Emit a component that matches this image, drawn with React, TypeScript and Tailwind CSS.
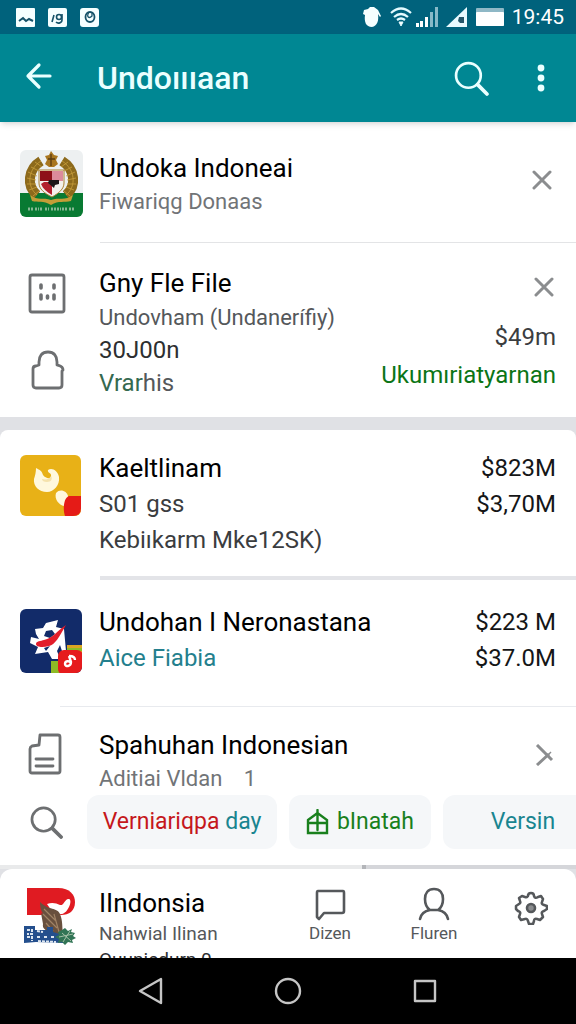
import type { ReactNode } from 'react'
import clsx from 'clsx'

const iconStroke = {
  fill: 'none',
  stroke: 'currentColor',
  strokeLinecap: 'round' as const,
  strokeLinejoin: 'round' as const,
}

function CloseIcon() {
  return (
    <svg width="20" height="20" viewBox="0 0 20 20" {...iconStroke} strokeWidth="3">
      <path d="M2 2 18 18M18 2 2 18" />
    </svg>
  )
}

function ArrowCrossIcon() {
  return (
    <svg width="20" height="22" viewBox="0 0 20 22" {...iconStroke} strokeWidth="3" strokeLinecap="butt">
      <path d="M3 1 18 16M3 21 15 10" />
      <path d="m14 11 3-3" strokeWidth="1.5" />
    </svg>
  )
}

function SearchIcon({ size, strokeWidth }: { size: number; strokeWidth: number }) {
  return (
    <svg width={size} height={size} viewBox="0 0 34 34" {...iconStroke} strokeWidth={strokeWidth}>
      <circle cx="14" cy="14" r="12" />
      <path d="m23 23 9 9" strokeWidth={strokeWidth + 1} />
    </svg>
  )
}

function EmblemLogo() {
  return (
    <svg width="63" height="67" viewBox="0 0 63 67">
      <defs>
        <clipPath id="emblem-clip">
          <rect width="63" height="67" rx="6" />
        </clipPath>
      </defs>
      <g clipPath="url(#emblem-clip)">
        <rect width="63" height="67" fill="#edf0f1" />
        <rect y="43" width="63" height="24" fill="#087a32" />
        <g fill="none" stroke="#8d6a1c" strokeWidth="10">
          <path d="M21 11C8 19 6 36 17 45" />
          <path d="M42 11C55 19 57 36 46 45" />
        </g>
        <g fill="none" stroke="#c9a03c" strokeWidth="0.8">
          <path d="m15 12 7 5M11 17l8 4M8 22l9 4M7 28l9 2M7 34l9 0M9 40l8-3M13 46l6-5" />
          <path d="m48 12-7 5M52 17l-8 4M55 22l-9 4M56 28l-9 2M56 34l-9 0M54 40l-8-3M50 46l-6-5" />
          <path d="M21 11C8 19 6 36 17 45M42 11C55 19 57 36 46 45" />
        </g>
        <path d="M31 1 34 5 38 6 36 10 38 14 34 17 29 17 25 14 27 10 25 6 29 5Z" fill="#a9761f" />
        <path d="M31 4v12M28 9h7" stroke="#593c12" strokeWidth="1.3" />
        <path d="M19 20h25v13c0 6-5 10-12 14-8-4-13-8-13-14Z" fill="#f4f1ed" stroke="#a98032" strokeWidth="1" />
        <path d="M20 21h12v10H20Z" fill="#8e1119" />
        <path d="M32 21h11v10H32Z" fill="#dc8b9b" />
        <path d="M24 32h8v13c-5-3-9-6-11-11Z" fill="#b3202c" />
        <path d="M29 30h10v4l-4 1-1 3-6-5Z" fill="#1e1718" />
        <path d="M10 45c8 6 13 2 21 5 8-3 14 1 22-5l-2 6c-7 2-12-1-20 4-8-5-13-2-19-4Z" fill="#c39d37" />
        <path d="M8 59h6m1 0h4m1 0h3m2 0h4m2 0h5m1 0h4m1 0h5m2 0h6" stroke="#86b793" strokeWidth="3" strokeDasharray="2 1" />
      </g>
    </svg>
  )
}

function GoldLogo() {
  return (
    <svg width="61" height="61" viewBox="0 0 61 61">
      <rect width="61" height="61" rx="6" fill="#e8b117" />
      <path d="M16 13c4 2 6 3 7 7 3 4 8 4 8 1 1-3-4-3-3-6 4-3 10 1 11 7 1 8-5 15-12 15-8 0-14-6-13-13 1-3 2-7 2-11Z" fill="#fff8dd" />
      <path d="M22 24c4 1 8 0 9-3 2 3 0 6-4 6-3 0-5-1-5-3Z" fill="#f5e2ac" />
      <path d="M36 38c4-5 11-2 12 3 0 5-1 9-4 10-5-1-10-7-8-13Z" fill="#fff8dd" />
      <path d="M49 41h12v12q0 8-8 8h-8c-2-5-2-18 4-20Z" fill="#e51b17" />
    </svg>
  )
}

function NavyLogo() {
  return (
    <svg width="62" height="64" viewBox="0 0 62 64">
      <defs>
        <clipPath id="navy-clip">
          <rect width="62" height="64" rx="6" />
        </clipPath>
      </defs>
      <g clipPath="url(#navy-clip)">
        <rect width="62" height="64" fill="#122b69" />
        <path d="M47 36h15v8H47Z" fill="#dba421" />
        <path d="M31 52h12v12H31Z" fill="#8ebb25" />
        <path d="M47 39h15v3H47Z" fill="#8ebb25" />
        <path d="M15 20 23 19 26 14 38 11 36 18 44 20 45 31 46 42 45 50 32 50 28 43 15 45 18 38 10 34 11 28 19 30 16 25Z" fill="#fff" />
        <path d="m26 22 6-1 3 4-5 4-6-2ZM24 39l6-2-4 5ZM37 42l3-6 2 6-3 5Z" fill="#122b69" />
        <path d="M46 16C39 28 35 36 29 37c-7 2-13 1-13-2 0-3 5-3 8-4 9-2 13-9 22-15Z" fill="#e21d2b" />
        <rect x="38" y="41" width="25" height="25" rx="6" fill="#e61b1d" />
        <path d="M49 47c4 0 6 1 6 4M49 47l2 6c0 5-6 5-6 2 0-3 4-4 6-1" fill="none" stroke="#fff" strokeWidth="2.4" />
      </g>
    </svg>
  )
}

function EagleLogo() {
  return (
    <svg width="54" height="60" viewBox="0 0 54 60">
      <path d="M4 1h31c12 0 17 7 17 14 0 9-6 13-14 13H4Z" fill="#e01b22" />
      <path d="M24 17c5-2 9-1 13 1 4 1 5-7 9-6 4 1-1 14-7 15-7 1-11-4-15-10Z" fill="#fff" />
      <path d="M17 15c9 9 17 5 20 12 3 7 2 14 3 21l-16-3c-1-3-5-3-4-8l-2-11 2 1c-2-3-3-7-3-12Z" fill="#68503e" />
      <path d="m21 22 12 12M20 27l14 14M23 36l7 8M31 27l5 18" stroke="#a08366" strokeWidth="1.2" />
      <path d="M1 39h11v4h12v-3h6v5l10 3v8l-27-1-12 1Z" fill="#244f8d" />
      <path d="M4 43h5v4H4m0 3h5v4M14 44l6 1M14 50h4m3 0h4m3 0h4m3 0h4M15 54l18 1" fill="none" stroke="#dce5ef" strokeWidth="2" strokeDasharray="3 1" />
      <path d="M39 43l3-2 3 3 4-2-1 3 4 1-2 3 3 2-4 2 1 3-5-1-3 3-3-3-4 1 1-4-4-2 4-2-1-3Z" fill="#317455" />
      <path d="m36 50 14-3M40 55l7-11M39 46l9 8" stroke="#a5c0a7" strokeWidth="1" />
    </svg>
  )
}

function GridIcon() {
  return (
    <svg width="38" height="41" viewBox="0 0 38 41" {...iconStroke} strokeWidth="2.8">
      <rect x="2" y="2" width="34" height="37" rx="2" />
      <path d="M13 12v3M26 12v3M13 22v4M26 22v4M19.500 23v2" strokeWidth="3.600" />
    </svg>
  )
}

function LockIcon() {
  return (
    <svg width="34" height="40" viewBox="0 0 34 40" {...iconStroke} strokeWidth="2.8">
      <path d="M8 15v-3C8 6 11 2 17 2s9 4 9 10v3c3 1 6 1 6 5l-1 1v14q0 3-3 3H5q-3 0-3-3V19q0-3 3-3Z" />
    </svg>
  )
}

function FileIcon() {
  return (
    <svg width="34" height="42" viewBox="0 0 34 42" {...iconStroke} strokeWidth="2.8">
      <path d="M12 2h18q2 0 2 2v34q0 2-2 2H4q-2 0-2-2V16q0-2 2-3l7-1Z" />
      <path d="M8 26h17M8 33h17" />
    </svg>
  )
}

function Row({ icon, aside, className, children }: { icon: ReactNode; aside?: ReactNode; className?: string; children: ReactNode }) {
  return (
    <article className={clsx('flex pl-5 pr-5', className)}>
      <div className="w-[79px] shrink-0">{icon}</div>
      <div className="min-w-0 flex-1 whitespace-nowrap">{children}</div>
      <div className="flex shrink-0 flex-col items-end whitespace-nowrap">{aside}</div>
    </article>
  )
}

function Title({ children }: { children: ReactNode }) {
  return <h2 className="text-[26px] leading-9 text-black">{children}</h2>
}

function StatusBar() {
  return (
    <div className="flex h-[34px] shrink-0 items-center justify-between bg-[#00627c] px-3 text-white">
      <div className="flex gap-[13px] pl-1">
        <svg width="19" height="19" viewBox="0 0 19 19">
          <rect width="19" height="19" rx="1" fill="#f5ffff" />
          <path d="m3 13 4-3 3 3 3-2 4 2" fill="none" stroke="#155268" strokeWidth="2" />
        </svg>
        <svg width="19" height="19" viewBox="0 0 19 19" fill="none" stroke="#155268" strokeWidth="1.6">
          <rect width="19" height="19" rx="2" fill="#f5ffff" stroke="none" />
          <path d="m6 7-2 7" />
          <circle cx="11" cy="9" r="2.500" />
          <path d="M14 6v6c0 3-4 4-6 2" />
        </svg>
        <svg width="19" height="19" viewBox="0 0 19 19" fill="none" stroke="#155268" strokeWidth="1.800">
          <rect width="19" height="19" rx="3" fill="#f5ffff" stroke="none" />
          <ellipse cx="10" cy="9" rx="4.500" ry="5" />
          <path d="M9 4c-3 5 0 7 3 4V4" strokeWidth="1.300" />
        </svg>
      </div>
      <div className="flex items-center gap-1">
        <svg width="20" height="22" viewBox="0 0 20 22" fill="#f5ffff">
          <path d="M8 1h4l4 3 3 6-1 1-2-3c1 7-1 12-6 13-6 0-8-5-7-12L1 8l1-4 4-1Z" />
        </svg>
        <svg className="ml-1" width="22" height="20" viewBox="0 0 22 20" fill="none" stroke="#e4fbff" strokeWidth="2.2">
          <path d="M1 6q10-9 20 0M4 10q7-6 14 0M7 13q4-3 8 0" />
          <path d="m9 15 4 0-2 4Z" fill="#fff" strokeWidth="1" />
        </svg>
        <svg width="22" height="20" viewBox="0 0 22 20">
          <path d="M0 16h3v4H0ZM4 14h3v6H4ZM9 10h3v10H9Z" fill="#fff" />
          <path d="M14 5h3v15h-3ZM19 0h3v20h-3Z" fill="#86b9c8" />
        </svg>
        <svg className="ml-1" width="22" height="20" viewBox="0 0 22 20">
          <path d="M21 0v20H0Z" fill="#e8faff" />
          <path d="M13 10h5v6h-4l-2-2Z" fill="#24566a" />
        </svg>
        <svg className="ml-1" width="28" height="18" viewBox="0 0 28 18">
          <rect width="28" height="18" rx="1" fill="#8fb8c6" />
          <rect y="4" width="28" height="14" rx="1" fill="#fff" />
        </svg>
        <time className="ml-1 text-[21px] leading-6">19:45</time>
      </div>
    </div>
  )
}

export default function App() {
  return (
    <div className="flex h-screen flex-col overflow-hidden bg-white font-[Roboto,sans-serif] text-[#55585b]">
      <StatusBar />
      <header className="relative flex h-[88px] shrink-0 items-center bg-[#008793] px-[25px] text-[#eaffff] shadow-md">
        <button aria-label="Back" className="flex w-[72px] shrink-0 pb-1">
          <svg width="28" height="28" viewBox="0 0 28 28" {...iconStroke} strokeWidth="3.2">
            <path d="M14 3 3 14l11 11M3 14h22" />
          </svg>
        </button>
        <h1 className="flex-1 text-[32px] leading-10 font-medium">Undoıııaan</h1>
        <button aria-label="Search">
          <SearchIcon size={35} strokeWidth={2.6} />
        </button>
        <button aria-label="More options" className="ml-[42px] flex w-5 justify-center">
          <svg width="8" height="28" viewBox="0 0 8 28" fill="currentColor">
            <circle cx="4" cy="4" r="3.400" />
            <circle cx="4" cy="14" r="3.400" />
            <circle cx="4" cy="24" r="3.400" />
          </svg>
        </button>
      </header>

      <main className="flex min-h-0 flex-1 flex-col overflow-hidden bg-[#e0e1e5] *:shrink-0">
        <section className="bg-white">
          <Row
            className="pt-7 pb-6"
            icon={<EmblemLogo />}
            aside={
              <button aria-label="Remove Undoka Indoneai" className="mt-5 mr-1 text-[#8b8d8f]">
                <CloseIcon />
              </button>
            }
          >
            <Title>Undoka Indoneai</Title>
            <p className="text-[22px] leading-8 text-[#717477]">Fiwariqg Donaas</p>
          </Row>
          <hr className="ml-[100px] border-[#e3e4e6]" />
          <Row
            className="pt-[22px] pb-[17px]"
            icon={
              <div className="flex flex-col gap-9 pt-2 pl-2 text-[#6d6f71]">
                <GridIcon />
                <span className="pl-[3px]">
                  <LockIcon />
                </span>
              </div>
            }
            aside={
              <>
                <button aria-label="Remove Gny Fle File" className="mt-3 mr-[2px] text-[#8b8d8f]">
                  <CloseIcon />
                </button>
                <p className="mt-[22px] text-2xl leading-9 text-[#3b3d3f]">$49m</p>
                <p className="text-2xl leading-10 text-[#0b7516]">Ukumıriatyarnan</p>
              </>
            }
          >
            <Title>Gny Fle File</Title>
            <p className="text-[22px] leading-[33px]">Undovham (Undanerífiy)</p>
            <p className="text-2xl leading-[33px] text-[#2d2f31]">30J00n</p>
            <p className="text-2xl leading-[33px]">
              <span className="text-[#35694f]">Vrar</span>his
            </p>
          </Row>
        </section>

        <section className="mt-[13px] rounded-t-lg bg-white">
          <Row
            className="pt-5 pb-[18px]"
            icon={
              <div className="pt-[5px]">
                <GoldLogo />
              </div>
            }
            aside={
              <div className="text-right text-2xl leading-9 text-[#151617]">
                <p className="leading-9">$823M</p>
                <p className="leading-9">$3,70M</p>
              </div>
            }
          >
            <Title>Kaeltlinam</Title>
            <p className="text-2xl leading-9 text-[#3b3d3f]">S01 gss</p>
            <p className="text-2xl leading-9 text-[#3b3d3f]">Kebiıkarm Mke12SK)</p>
          </Row>
          <hr className="ml-[100px] border-t-4 border-[#e3e4e8]" />
          <Row
            className="pt-6 pb-[30px]"
            icon={
              <div className="pt-[5px]">
                <NavyLogo />
              </div>
            }
            aside={
              <div className="text-right text-2xl leading-9 text-[#151617]">
                <p className="leading-9">$223 M</p>
                <p className="leading-9">$37.0M</p>
              </div>
            }
          >
            <Title>Undohan I Neronastana</Title>
            <p className="text-2xl leading-9 text-[#247f8d]">Aice Fiabia</p>
          </Row>
          <hr className="ml-[60px] border-[#e8eaee]" />
          <Row
            className="pt-5"
            icon={
              <div className="pt-[6px] pl-2 text-[#6d6f71]">
                <FileIcon />
              </div>
            }
            aside={
              <button aria-label="Open Spahuhan Indonesian" className="mt-[17px] mr-[2px] text-[#8b8d8f]">
                <ArrowCrossIcon />
              </button>
            }
          >
            <Title>Spahuhan Indonesian</Title>
            <p className="text-[22px] leading-8 text-[#717477]">
              Aditiai Vldan <span className="ml-4">1</span>
            </p>
          </Row>
          <div className="flex items-center overflow-hidden pb-4 pl-[30px] text-[23px] *:shrink-0">
            <button aria-label="Search" className="w-[57px] text-[#6d6f71]">
              <SearchIcon size={33} strokeWidth={2.8} />
            </button>
            <button className="mr-3 h-[54px] w-[190px] rounded-xl bg-[#f5f7f9] text-[#c5171c]">
              Verniariqpa <span className="text-[#198590]">day</span>
            </button>
            <button className="mr-3 flex h-[54px] w-[142px] items-center justify-center gap-2 rounded-xl bg-[#f5f7f9] text-[#19801d]">
              <svg width="23" height="26" viewBox="0 0 23 26" {...iconStroke} strokeWidth="2.4" strokeLinejoin="miter">
                <path d="M2 11 11.500 4 21 11v13H2ZM2 14h19M11.500 1v20" />
              </svg>
              bInatah
            </button>
            <button className="h-[54px] w-[160px] rounded-xl bg-[#f5f7f9] text-[#198590]">Versin</button>
          </div>
        </section>

        <div className="flex h-1">
          <div className="flex-[19] bg-[#e9eaeb]" />
          <div className="w-1 bg-[#b3b5b9]" />
          <div className="flex-[11] bg-[#d5d6da]" />
        </div>

        <section className="rounded-t-xl bg-white">
          <Row
            className="pt-4"
            icon={
              <div className="pt-[2px] pl-[3px]">
                <EagleLogo />
              </div>
            }
            aside={
              <nav className="flex items-start text-[17px] leading-6">
                <button className="flex w-20 flex-col items-center pt-1">
                  <svg width="31" height="32" viewBox="0 0 31 32" {...iconStroke} strokeWidth="2.6">
                    <path d="M3 2h25q1 0 1 2v18q0 2-2 2H9l-5 6-2-2V4q0-2 1-2Z" />
                  </svg>
                  <span>Dizen</span>
                </button>
                <button className="ml-6 flex w-20 flex-col items-center pt-[2px]">
                  <svg width="32" height="34" viewBox="0 0 32 34" {...iconStroke} strokeWidth="2.6">
                    <path d="M16 2C10 2 7 6 7 12c0 5 2 9 5 11h8c3-2 5-6 5-11 0-6-3-10-9-10ZM12 23c-6 1-9 4-10 9M20 23c6 1 9 4 10 9" />
                  </svg>
                  <span>Fluren</span>
                </button>
                <button aria-label="Settings" className="ml-10 mr-2 pt-[6px]">
                  <svg width="34" height="34" viewBox="0 0 34 34" {...iconStroke} strokeWidth="2.5">
                    <path d="M14 5q0-3 3-3t3 3q1 3 4 1l3-1 2 3-1 3q-1 2 2 3l3 1v3l-3 2q-3 1-2 3l1 3-3 3-3-1q-3-1-3 2l-1 3h-4l-1-3q-1-3-3-2l-4 1-2-3 1-3q1-2-2-3l-2-2v-3l3-2q2-1 1-3l-1-3 3-2 3 1q3 1 3-2Z" />
                    <circle cx="17" cy="17" r="4" fill="#8b8d8f" strokeWidth="2.600" />
                  </svg>
                </button>
              </nav>
            }
          >
            <Title>IIndonsia</Title>
            <p className="text-[19px] leading-[26px]">Nahwial Ilinan</p>
            <p className="text-[19px] leading-[26px] text-[#2d2f31]">Ouuniedurn 0</p>
          </Row>
        </section>
      </main>

      <nav className="flex h-[66px] shrink-0 items-center justify-center gap-[110px] bg-black text-[#c5c5c5]">
        <button aria-label="Back">
          <svg width="26" height="28" viewBox="0 0 26 28" {...iconStroke} strokeWidth="2.4">
            <path d="M23 2v24L2 14Z" />
          </svg>
        </button>
        <button aria-label="Home">
          <svg width="28" height="28" viewBox="0 0 28 28" {...iconStroke} strokeWidth="2.4">
            <circle cx="14" cy="14" r="12" />
          </svg>
        </button>
        <button aria-label="Recent apps">
          <svg width="26" height="26" viewBox="0 0 26 26" {...iconStroke} strokeWidth="2.4">
            <rect x="3" y="3" width="20" height="20" />
          </svg>
        </button>
      </nav>
    </div>
  )
}
